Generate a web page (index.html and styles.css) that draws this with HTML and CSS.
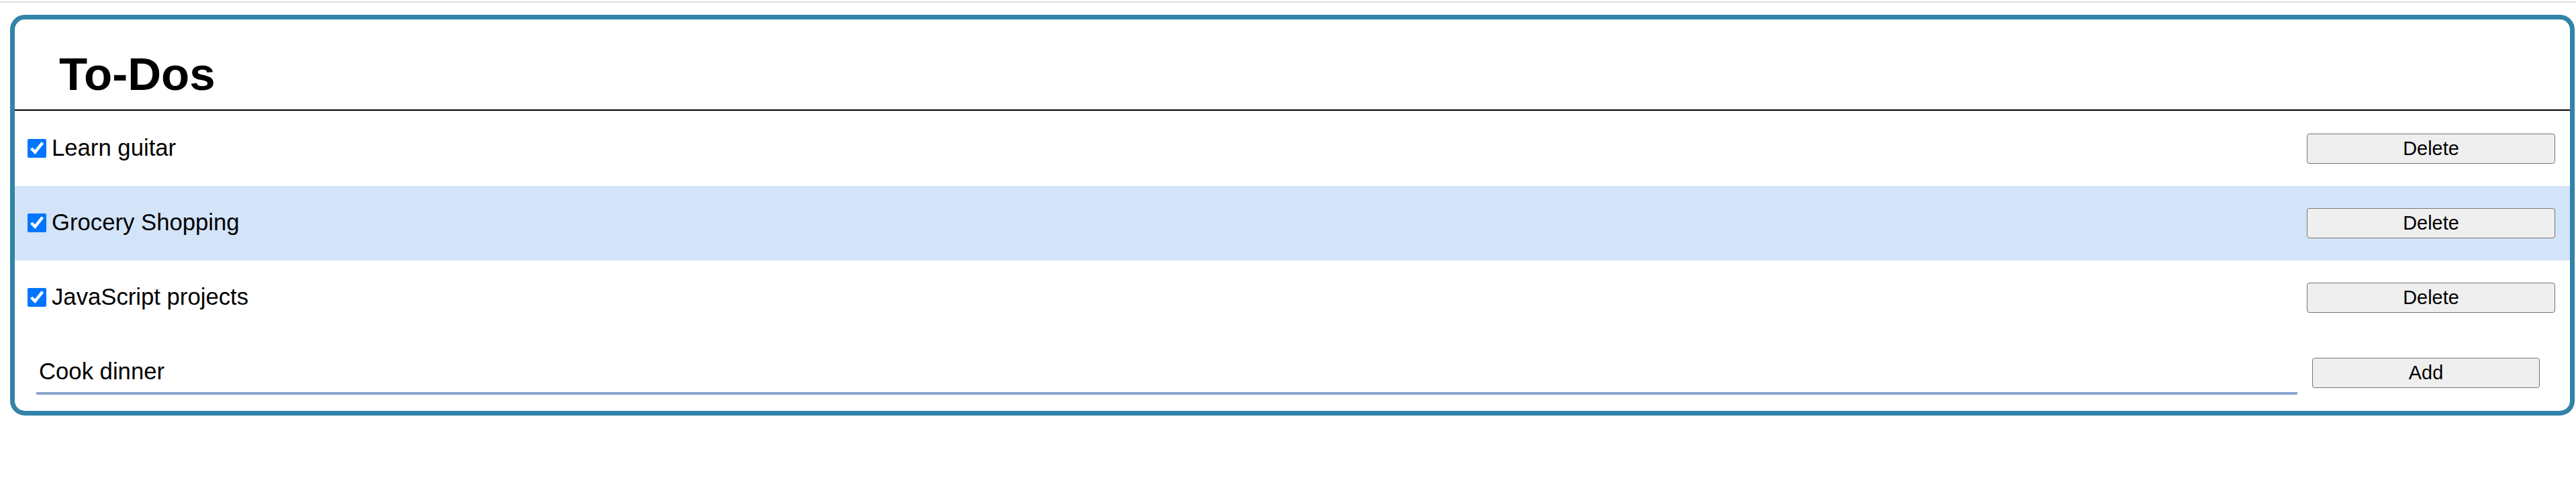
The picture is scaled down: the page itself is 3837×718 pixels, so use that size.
FILE: index.html
```html
<!DOCTYPE html>
<html lang="en">
<head>
<meta charset="utf-8">
<title>To-Dos</title>
<link rel="stylesheet" href="styles.css">
</head>
<body>
<div class="topline"></div>
<main class="card">
  <header class="card-header">
    <h1 class="title">To-Dos</h1>
  </header>
  <ul class="list">
    <li class="row">
      <input class="check" type="checkbox" checked>
      <span class="label">Learn guitar</span>
      <button class="btn btn-delete" type="button">Delete</button>
    </li>
    <li class="row row-hover">
      <input class="check" type="checkbox" checked>
      <span class="label">Grocery Shopping</span>
      <button class="btn btn-delete" type="button">Delete</button>
    </li>
    <li class="row">
      <input class="check" type="checkbox" checked>
      <span class="label">JavaScript projects</span>
      <button class="btn btn-delete" type="button">Delete</button>
    </li>
  </ul>
  <form class="add-row">
    <input class="new-todo" type="text" value="Cook dinner" autofocus>
    <button class="btn btn-add" type="button">Add</button>
  </form>
</main>
</body>
</html>
```
FILE: styles.css
```css
html, body {
  margin: 0;
  padding: 0;
  background: #ffffff;
}

body {
  padding-top: 2px;
  font-family: "Liberation Sans", Arial, sans-serif;
  color: #000000;
}

.topline {
  height: 2px;
  background: #dcdce5;
}

.card {
  margin: 18px 2px 0 15px;
  border: 7px solid #3283a7;
  border-radius: 22px;
  overflow: hidden;
}

.card-header {
  height: 136px;
  box-sizing: border-box;
  display: flex;
  align-items: flex-end;
  padding: 0 0 13px 66px;
  border-bottom: 2px solid #000000;
}

.title {
  margin: 0;
  font-size: 69px;
  font-weight: bold;
  line-height: normal;
}

.list {
  list-style: none;
  margin: 0;
  padding: 1px 0 0 0;
}

.row {
  height: 111px;
  box-sizing: border-box;
  display: flex;
  align-items: center;
  padding: 0 22px 0 19px;
}

.row-hover {
  background: #d3e3f8;
}

.check {
  width: 28px;
  height: 28px;
  margin: 0 0 2px 0;
  accent-color: #0075ff;
}

.label {
  margin-left: 8px;
  font-size: 34.7px;
  margin-bottom: 3px;
}

.btn {
  font-family: "Liberation Sans", Arial, sans-serif;
  font-size: 28.9px;
  color: #000000;
  background: #efefef;
  border: 1px solid #767676;
  border-radius: 4px;
  height: 45px;
  padding: 0;
}

.btn-delete {
  margin-left: auto;
  width: 370px;
}

.add-row {
  height: 113px;
  box-sizing: border-box;
  display: flex;
  align-items: flex-start;
  padding: 34px 45px 0 32px;
  margin: 0;
}

.new-todo {
  flex: 1;
  min-width: 0;
  font-family: "Liberation Sans", Arial, sans-serif;
  font-size: 34.7px;
  color: #000000;
  border: none;
  border-bottom: 4px solid #8aa5cd;
  padding: 1px 4px 11px 4px;
  margin: 0;
  outline: none;
  background: transparent;
  caret-color: #000000;
}

.btn-add {
  width: 339px;
  margin-left: 22px;
}
```
